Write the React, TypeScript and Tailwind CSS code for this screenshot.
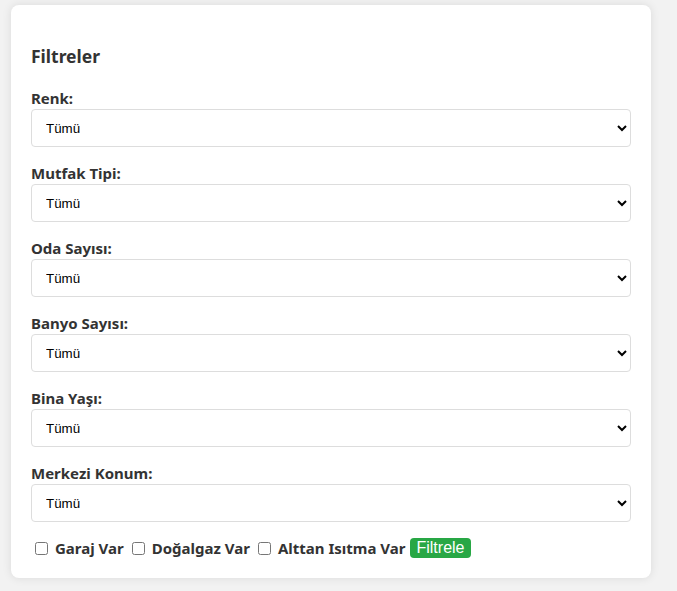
import React from "react";

const fields = ["Renk:", "Mutfak Tipi:", "Oda Sayısı:", "Banyo Sayısı:", "Bina Yaşı:", "Merkezi Konum:"];

export default function App() {
  return (
    <div className="min-h-[591px] bg-[#f2f2f2] pt-[5px] pl-[11px] pb-[11px]" style={{ fontFamily: '"Noto Sans", sans-serif' }}>
      <div className="w-[640px] rounded-lg bg-white px-5 pt-5 pb-[19px] text-[#333] shadow-[0_0_10px_rgba(0,0,0,0.1)]">
        <h3 className="my-[18.72px] text-[17.5px] font-bold leading-[25px]">Filtreler</h3>
        {fields.map((f) => (
          <div key={f}>
            <label className="block text-[15px] font-bold leading-[22px]">{f}</label>
            <select
              className="mb-[15px] box-border block h-[38px] w-full rounded border border-[#ddd] bg-white px-[10px] text-[13.33px] text-black"
              style={{ fontFamily: '"Liberation Sans", Arial, sans-serif' }}
            >
              <option>Tümü</option>
            </select>
          </div>
        ))}
        <div className="mt-px flex items-center text-[15px] font-bold leading-[22px]">
          <label className="flex items-center">
            <input type="checkbox" className="ml-[4px] mr-[3px] my-[3px] h-[13px] w-[13px]" />
            <span className="ml-[4px]">Garaj Var</span>
          </label>
          <label className="ml-[4px] flex items-center">
            <input type="checkbox" className="ml-[4px] mr-[3px] my-[3px] h-[13px] w-[13px]" />
            <span className="ml-[4px]">Doğalgaz Var</span>
          </label>
          <label className="ml-[4px] flex items-center">
            <input type="checkbox" className="ml-[4px] mr-[3px] my-[3px] h-[13px] w-[13px]" />
            <span className="ml-[4px]">Alttan Isıtma Var</span>
          </label>
          <button
            className="ml-[5px] rounded bg-[#28a745] px-[6px] py-[1px] text-[16px] font-normal leading-[18px] text-white"
            style={{ fontFamily: '"Liberation Sans", Arial, sans-serif' }}
          >
            Filtrele
          </button>
        </div>
      </div>
    </div>
  );
}
